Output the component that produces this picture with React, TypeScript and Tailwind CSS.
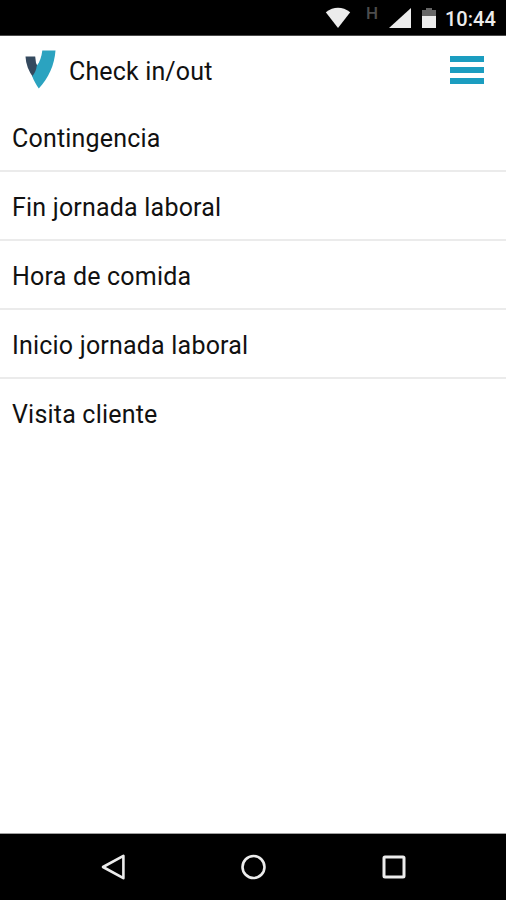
import React from "react"

const items = [
  "Contingencia",
  "Fin jornada laboral",
  "Hora de comida",
  "Inicio jornada laboral",
  "Visita cliente",
]

const StatusBar = () => {
  return (
    <div className="h-9 w-full shrink-0 bg-black border-b border-[#4a4a4a] flex items-center justify-end pr-[11px]">
      <svg width="26" height="22" viewBox="0 0 26 22" fill="#ececec">
        <path d="M0.8 5.2 Q13 -3.6 25.2 5.2 L13 21 Z" />
      </svg>
      <span className="ml-[14px] mb-[9px] w-[14px] text-center text-[17px] leading-none font-medium text-[#4d4d4d]">
        H
      </span>
      <svg width="22" height="20" viewBox="0 0 22 20" fill="#ececec" className="ml-[10px]">
        <path d="M22 0 V20 H0 Z" />
      </svg>
      <svg width="14" height="20" viewBox="0 0 14 20" className="ml-[11px]">
        <path d="M4 0 H10 V2 H14 V8 H0 V2 H4 Z" fill="#666666" />
        <path d="M0 8 H14 V20 H0 Z" fill="#ececec" />
      </svg>
      <span className="ml-[9px] mt-[3px] w-[50px] text-[20px] leading-none font-medium whitespace-nowrap text-[#ececec]">
        10:44
      </span>
    </div>
  )
}

const Header = () => {
  return (
    <header className="h-[67px] w-full shrink-0 flex items-center pl-[25px] pr-[22px]">
      <svg width="31" height="39" viewBox="0 0 31 39">
        <path d="M0.5 6.5 H10.2 L11 13 L13 17 L8.5 28 C3.5 21 0.8 14 0.5 6.5 Z" fill="#34495e" />
        <path
          d="M17.3 0.5 H30.5 C29.5 15 23.5 28 13.8 38.5 C11.3 35 9 31 7.2 26.3 C9.8 23.5 11.3 20 11.8 15.8 C14.8 12 16.6 6.5 17.3 0.5 Z"
          fill="#2ba3c0"
        />
      </svg>
      <h1 className="ml-[13px] mt-[3px] grow text-[25px] leading-none tracking-[0.15px] text-[#111111]">
        Check in/out
      </h1>
      <button className="flex flex-col gap-[5px]" aria-label="Menu">
        <span className="h-[6px] w-[34px] bg-[#1b9dc0]" />
        <span className="h-[6px] w-[34px] bg-[#1b9dc0]" />
        <span className="h-[6px] w-[34px] bg-[#1b9dc0]" />
      </button>
    </header>
  )
}

const NavBar = () => {
  return (
    <nav className="h-[67px] w-full shrink-0 bg-black border-t border-[#a0a0a0] flex items-center justify-between pl-[100px] pr-[100px]">
      <svg width="26" height="28" viewBox="0 0 26 28" fill="none" stroke="#ececec" strokeWidth="2.6">
        <path d="M23.4 2.8 V25.2 L3 14 Z" strokeLinejoin="round" />
      </svg>
      <svg width="26" height="26" viewBox="0 0 26 26" fill="none" stroke="#ececec" strokeWidth="2.6">
        <circle cx="12.5" cy="13" r="11" />
      </svg>
      <svg width="24" height="24" viewBox="0 0 24 24" fill="none" stroke="#ececec" strokeWidth="3">
        <rect x="2" y="2" width="20" height="20" rx="1" />
      </svg>
    </nav>
  )
}

const App = () => {
  return (
    <div className="h-[900px] w-full flex flex-col bg-white font-['Roboto',sans-serif]">
      <StatusBar />
      <Header />
      <ul className="grow divide-y-2 divide-[#ebebeb]">
        {items.map((item) => (
          <li
            key={item}
            className="h-[69px] flex items-center pt-1 last:pt-0.5 pl-[12px] text-[25px] leading-none tracking-[0.2px] text-[#111111]"
          >
            {item}
          </li>
        ))}
      </ul>
      <NavBar />
    </div>
  )
}

export default App
